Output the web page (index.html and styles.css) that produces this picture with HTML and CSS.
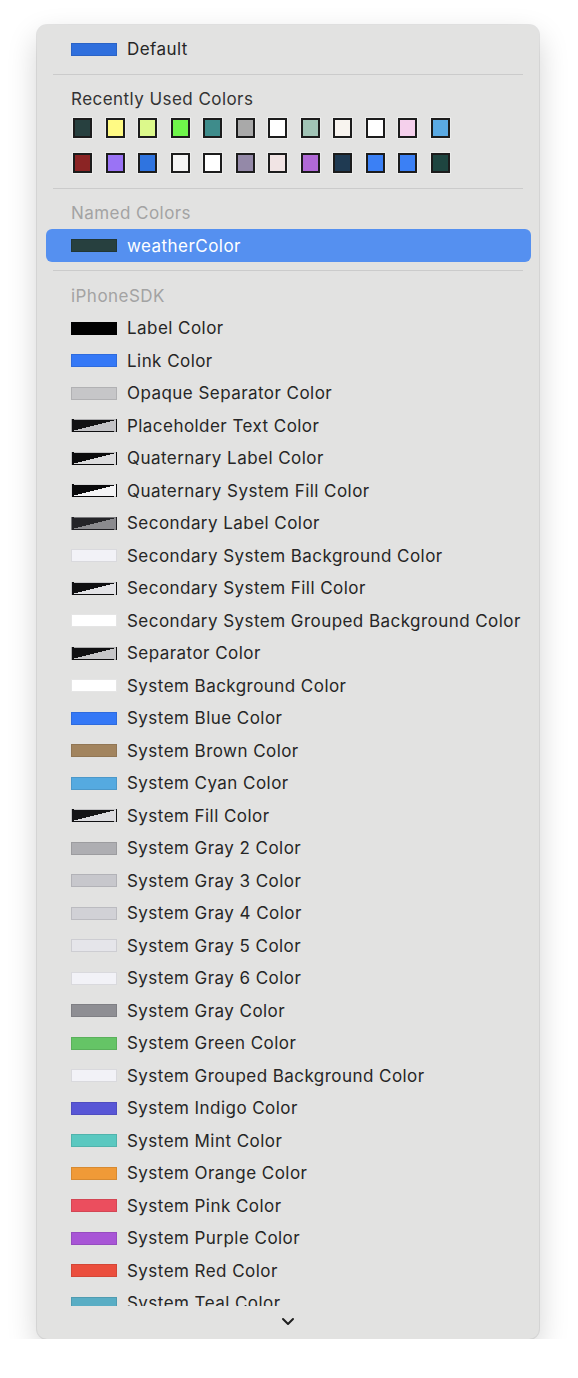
FILE: index.html
```html
<!DOCTYPE html>
<html>
<head>
<meta charset="utf-8">
<link rel="stylesheet" href="styles.css">
</head>
<body>
<div class="panel">
  <div class="row"><span class="sw" style="background:#2f6fdd"></span><span class="lbl">Default</span></div>
  <div class="divider"></div>
  <div class="header dark">Recently Used Colors</div>
  <div class="recent">
    <span class="sq" style="background:#27403f"></span>
    <span class="sq" style="background:#fffa84"></span>
    <span class="sq" style="background:#dcf98b"></span>
    <span class="sq" style="background:#6ff64b"></span>
    <span class="sq" style="background:#3e8c8b"></span>
    <span class="sq" style="background:#a9a9a9"></span>
    <span class="sq" style="background:#ffffff"></span>
    <span class="sq" style="background:#a1c4b6"></span>
    <span class="sq" style="background:#f8f4ef"></span>
    <span class="sq" style="background:#ffffff"></span>
    <span class="sq" style="background:#f5d0ec"></span>
    <span class="sq" style="background:#5aaae3"></span>
    <span class="sq" style="background:#8b2424"></span>
    <span class="sq" style="background:#9a73f5"></span>
    <span class="sq" style="background:#2f74e0"></span>
    <span class="sq" style="background:#f4f4f4"></span>
    <span class="sq" style="background:#ffffff"></span>
    <span class="sq" style="background:#9489a8"></span>
    <span class="sq" style="background:#f1e4e4"></span>
    <span class="sq" style="background:#b069d6"></span>
    <span class="sq" style="background:#1f3a52"></span>
    <span class="sq" style="background:#3b80f5"></span>
    <span class="sq" style="background:#3b80f5"></span>
    <span class="sq" style="background:#1e4540"></span>
  </div>
  <div class="divider div2"></div>
  <div class="header light">Named Colors</div>
  <div class="row selected"><span class="sw" style="background:#27403f"></span><span class="lbl">weatherColor</span></div>
  <div class="divider"></div>
  <div class="scroll">
    <div class="header light sdk">iPhoneSDK</div>
    <div class="row"><span class="sw" style="background:#000000"></span><span class="lbl">Label Color</span></div>
    <div class="row"><span class="sw" style="background:#3478f6"></span><span class="lbl">Link Color</span></div>
    <div class="row"><span class="sw" style="background:#c6c6c8"></span><span class="lbl">Opaque Separator Color</span></div>
    <div class="row"><span class="sw split s-placeholder"></span><span class="lbl">Placeholder Text Color</span></div>
    <div class="row"><span class="sw split s-quatlabel"></span><span class="lbl">Quaternary Label Color</span></div>
    <div class="row"><span class="sw split s-quatfill"></span><span class="lbl">Quaternary System Fill Color</span></div>
    <div class="row"><span class="sw split s-seclabel"></span><span class="lbl">Secondary Label Color</span></div>
    <div class="row"><span class="sw" style="background:#f2f2f7"></span><span class="lbl">Secondary System Background Color</span></div>
    <div class="row"><span class="sw split s-secfill"></span><span class="lbl">Secondary System Fill Color</span></div>
    <div class="row"><span class="sw" style="background:#ffffff"></span><span class="lbl">Secondary System Grouped Background Color</span></div>
    <div class="row"><span class="sw split s-sep"></span><span class="lbl">Separator Color</span></div>
    <div class="row"><span class="sw" style="background:#ffffff"></span><span class="lbl">System Background Color</span></div>
    <div class="row"><span class="sw" style="background:#3478f6"></span><span class="lbl">System Blue Color</span></div>
    <div class="row"><span class="sw" style="background:#a2845e"></span><span class="lbl">System Brown Color</span></div>
    <div class="row"><span class="sw" style="background:#55aae0"></span><span class="lbl">System Cyan Color</span></div>
    <div class="row"><span class="sw split s-fill"></span><span class="lbl">System Fill Color</span></div>
    <div class="row"><span class="sw" style="background:#aeaeb2"></span><span class="lbl">System Gray 2 Color</span></div>
    <div class="row"><span class="sw" style="background:#c7c7cc"></span><span class="lbl">System Gray 3 Color</span></div>
    <div class="row"><span class="sw" style="background:#d1d1d6"></span><span class="lbl">System Gray 4 Color</span></div>
    <div class="row"><span class="sw" style="background:#e5e5ea"></span><span class="lbl">System Gray 5 Color</span></div>
    <div class="row"><span class="sw" style="background:#f2f2f7"></span><span class="lbl">System Gray 6 Color</span></div>
    <div class="row"><span class="sw" style="background:#8e8e93"></span><span class="lbl">System Gray Color</span></div>
    <div class="row"><span class="sw" style="background:#65c466"></span><span class="lbl">System Green Color</span></div>
    <div class="row"><span class="sw" style="background:#f2f2f7"></span><span class="lbl">System Grouped Background Color</span></div>
    <div class="row"><span class="sw" style="background:#5856d6"></span><span class="lbl">System Indigo Color</span></div>
    <div class="row"><span class="sw" style="background:#5ac8c0"></span><span class="lbl">System Mint Color</span></div>
    <div class="row"><span class="sw" style="background:#f09a37"></span><span class="lbl">System Orange Color</span></div>
    <div class="row"><span class="sw" style="background:#eb4e5e"></span><span class="lbl">System Pink Color</span></div>
    <div class="row"><span class="sw" style="background:#a855d6"></span><span class="lbl">System Purple Color</span></div>
    <div class="row"><span class="sw" style="background:#eb4e3d"></span><span class="lbl">System Red Color</span></div>
    <div class="row"><span class="sw" style="background:#59adc4"></span><span class="lbl">System Teal Color</span></div>
  </div>
  <div class="more">
    <svg width="14" height="9" viewBox="0 0 14 9"><path d="M2 2 L7 7 L12 2" fill="none" stroke="#1f1f1f" stroke-width="2" stroke-linecap="round" stroke-linejoin="round"/></svg>
  </div>
</div>
</body>
</html>
```
FILE: styles.css
```css
html, body {
  margin: 0;
  padding: 0;
  background: #ffffff;
}
body {
  font-family: "Inter", "Liberation Sans", sans-serif;
  font-size: 17px;
  color: #262626;
}
.panel {
  margin: 25px 0 0 37px;
  width: 502px;
  height: 1314px;
  box-sizing: border-box;
  background: #e2e2e1;
  border-radius: 10px;
  box-shadow: 0 0 0 1px rgba(0,0,0,0.09), 0 12px 30px rgba(0,0,0,0.18);
  padding-top: 8px;
  display: flex;
  flex-direction: column;
  overflow: hidden;
}
.row {
  height: 32.5px;
  flex: 0 0 32.5px;
  display: flex;
  align-items: center;
  padding-left: 34px;
  white-space: nowrap;
}
.sw {
  width: 46px;
  height: 13px;
  box-sizing: border-box;
  border: 1px solid rgba(0,0,0,0.1);
  flex: 0 0 auto;
}
.lbl {
  margin-left: 10px;
  letter-spacing: 0.45px;
}
.divider {
  height: 1px;
  flex: 0 0 1px;
  background: #cbcbcb;
  margin: 8px 16px;
}
.div2 {
  margin-top: 15px;
}
.header {
  height: 32px;
  flex: 0 0 32px;
  display: flex;
  align-items: center;
  padding-left: 34px;
  letter-spacing: 0.45px;
}
.header.dark { color: #333333; }
.header.light { color: #a3a3a3; }
.sdk { margin-top: 1px; }
.recent {
  display: grid;
  grid-template-columns: repeat(12, 19px);
  column-gap: 13.5px;
  row-gap: 15.5px;
  padding-left: 36px;
  margin-top: 3px;
}
.sq {
  width: 19px;
  height: 20px;
  box-sizing: border-box;
  border: 2px solid #1c1c1c;
  box-shadow: 0 0 0 1px rgba(255,255,255,0.35);
}
.selected {
  margin: 0 8px 0 9px;
  padding-left: 25px;
  height: 33px;
  flex: 0 0 33px;
  background: #5590f0;
  border-radius: 6px;
  color: #ffffff;
}
.selected .sw {
  border-color: rgba(0,0,0,0.15);
}
.scroll {
  height: 1027px;
  flex: 0 0 1027px;
  overflow: hidden;
  display: flex;
  flex-direction: column;
}
.split { border-color: rgba(0,0,0,0.12); }
.s-placeholder { background: linear-gradient(to bottom right, #121214 50%, #c4c4c7 50%); }
.s-quatlabel { background: linear-gradient(to bottom right, #0b0b0c 50%, #dcdcdd 50%); }
.s-quatfill { background: linear-gradient(to bottom right, #09090a 50%, #f4f4f5 50%); }
.s-seclabel { background: linear-gradient(to bottom right, #242428 50%, #8a8a8e 50%); }
.s-secfill { background: linear-gradient(to bottom right, #0f0f11 50%, #e3e3e6 50%); }
.s-sep { background: linear-gradient(to bottom right, #101012 50%, #c6c6c8 50%); }
.s-fill { background: linear-gradient(to bottom right, #141416 50%, #dcdcdf 50%); }
.more {
  flex: 1 1 auto;
  display: flex;
  align-items: center;
  justify-content: center;
}
.more svg { display: block; margin-top: -2px; }
```
